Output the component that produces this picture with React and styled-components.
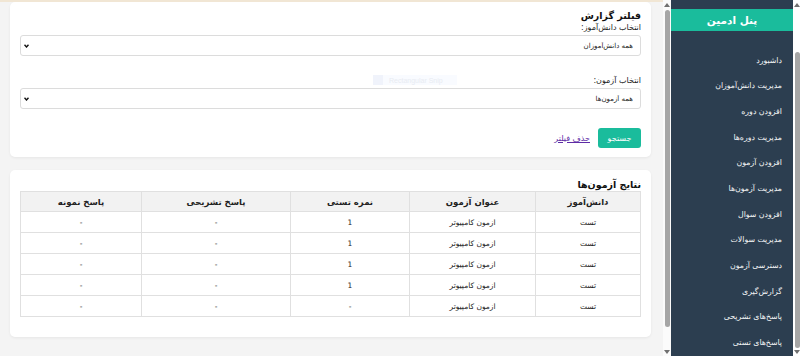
import React, { useLayoutEffect, useRef } from "react";
import styled, { createGlobalStyle } from "styled-components";

const Global = createGlobalStyle`
  html, body { margin: 0; padding: 0; height: 100%; }
  body { font-family: "DejaVu Sans", "Noto Sans", sans-serif; background: #f4f4f4; color: #222; }
  #root { height: 100%; }
  * { box-sizing: border-box; }
`;

const Layout = styled.div`
  display: flex;
  height: 100vh;
  width: 100%;
`;

const Pane = styled.div`
  flex: 0 0 ${(p) => p.$w}px;
  height: 100%;
  display: flex;
  background: ${(p) => p.$bg};
`;

const ScrollArea = styled.div`
  position: relative;
  flex: 1;
  min-width: 0;
  height: 100%;
  overflow-y: scroll;
  scrollbar-width: none;
  &::-webkit-scrollbar { display: none; }
`;

const MainArea = styled(ScrollArea)`
  background: #f4f4f4;
  border-top: 2px solid #f1e6d4;
  padding: 0 12px 42px 10px;
`;

const Track = styled.div`
  flex: 0 0 8px;
  height: 100%;
  background: ${(p) => p.$bg};
  display: flex;
  flex-direction: column;
  align-items: center;
`;

const Arrow = styled.svg`
  flex: 0 0 auto;
  width: 6px;
  height: 4px;
  margin: ${(p) => p.$m};
  fill: #707070;
`;

const Thumb = styled.div`
  width: 5px;
  border-radius: 3px;
  background: #a6a6a6;
  margin-top: ${(p) => p.$top}px;
  height: ${(p) => p.$h}px;
`;

const Card = styled.section`
  direction: rtl;
  background: #fff;
  border-radius: 5px;
  box-shadow: 0 1px 3px rgba(0, 0, 0, 0.06);
  padding: ${(p) => p.$pad};
  & + & { margin-top: 13px; }
`;

const CardTitle = styled.h2`
  margin: 0;
  font-size: 9.5px;
  line-height: 12px;
  font-weight: bold;
  color: #111;
`;

const Field = styled.div`
  display: flex;
  flex-direction: column;
  & + & { margin-top: 19px; }
`;

const Label = styled.label`
  display: block;
  font-size: 8px;
  line-height: 11px;
  color: #222;
  margin-bottom: 2px;
`;

const SelectWrap = styled.div`
  position: relative;
  height: 21px;
`;

const Select = styled.select`
  display: block;
  appearance: none;
  -webkit-appearance: none;
  height: 21px;
  width: 100%;
  margin: 0;
  border: 1px solid #dcdcdc;
  border-radius: 3px;
  background: #fff;
  font-family: "DejaVu Sans", sans-serif;
  font-size: 7px;
  color: #222;
  padding: 0 7px 0 16px;
  direction: rtl;
  outline: none;
`;

const Chevron = styled.svg`
  position: absolute;
  left: 4px;
  top: 9px;
  width: 5px;
  height: 4px;
  fill: none;
  stroke: #111;
  stroke-width: 1.4;
  pointer-events: none;
`;

const Actions = styled.div`
  display: flex;
  align-items: center;
  gap: 8px;
  margin-top: 19px;
`;

const Button = styled.button`
  height: 20px;
  width: 43px;
  padding: 0;
  border: none;
  border-radius: 3px;
  background: #1abc9c;
  color: #fff;
  font-family: "DejaVu Sans", sans-serif;
  font-size: 8px;
`;

const Link = styled.a`
  color: #5e2ca5;
  font-size: 8px;
  text-decoration: underline;
`;

const Snip = styled.div`
  position: absolute;
  left: 373px;
  top: 73px;
  width: 84px;
  height: 10px;
  display: flex;
  align-items: center;
  gap: 6px;
  background: #f9fbff;
  color: #e8ebf2;
  font-size: 7px;
  font-family: "Liberation Sans", sans-serif;
  pointer-events: none;
`;

const SnipIcon = styled.span`
  width: 10px;
  height: 10px;
  background: #f0f3fb;
`;

const Table = styled.table`
  width: 100%;
  border-collapse: collapse;
  table-layout: fixed;
  font-size: 7.5px;
  color: #222;
`;

const Th = styled.th`
  background: #f2f2f2;
  border: 1px solid #e0e0e0;
  height: 20px;
  padding: 0;
  font-size: 8.5px;
  font-weight: bold;
  text-align: center;
`;

const Td = styled.td`
  border: 1px solid #e0e0e0;
  height: 21px;
  padding: 0;
  text-align: center;
`;

const SideArea = styled(ScrollArea)`
  background: #2c3e50;
  padding-top: 62px;
  padding-bottom: 1px;
`;

const SideHeader = styled.div`
  direction: rtl;
  height: 22px;
  display: flex;
  align-items: center;
  justify-content: center;
  background: #1abc9c;
  color: #fff;
  font-weight: bold;
  font-size: 10.5px;
  margin-bottom: 16.5px;
`;

const Menu = styled.ul`
  list-style: none;
  margin: 0;
  padding: 0;
  direction: rtl;
`;

const MenuItem = styled.li`
  height: 25.67px;
  display: flex;
  align-items: center;
  padding: 0 11px;
  color: #f4f6f7;
  font-size: 7.8px;
`;

const menu = [
  "داشبورد",
  "مدیریت دانش‌آموزان",
  "افزودن دوره",
  "مدیریت دوره‌ها",
  "افزودن آزمون",
  "مدیریت آزمون‌ها",
  "افزودن سوال",
  "مدیریت سوالات",
  "دسترسی آزمون",
  "گزارش‌گیری",
  "پاسخ‌های تشریحی",
  "پاسخ‌های تستی",
];

const cols = [
  { t: "دانش‌آموز", w: 105 },
  { t: "عنوان آزمون", w: 126 },
  { t: "نمره تستی", w: 119 },
  { t: "پاسخ تشریحی", w: 149 },
  { t: "پاسخ نمونه", w: 121 },
];

const rows = [
  ["تست", "ازمون کامپیوتر", "1", "-", "-"],
  ["تست", "ازمون کامپیوتر", "1", "-", "-"],
  ["تست", "ازمون کامپیوتر", "1", "-", "-"],
  ["تست", "ازمون کامپیوتر", "1", "-", "-"],
  ["تست", "ازمون کامپیوتر", "-", "-", "-"],
];

function ScrollTrack({ bg, top, h }) {
  return (
    <Track $bg={bg}>
      <Arrow viewBox="0 0 6 4" $m="3px 0 0">
        <polygon points="3,0 6,4 0,4" />
      </Arrow>
      <Thumb $top={top} $h={h} />
      <Arrow viewBox="0 0 6 4" $m="auto 0 2px">
        <polygon points="0,0 6,0 3,4" />
      </Arrow>
    </Track>
  );
}

function FilterSelect({ label, value }) {
  return (
    <Field>
      <Label>{label}</Label>
      <SelectWrap>
        <Select defaultValue="all">
          <option value="all">{value}</option>
        </Select>
        <Chevron viewBox="0 0 5 4">
          <polyline points="0.5,0.8 2.5,3 4.5,0.8" />
        </Chevron>
      </SelectWrap>
    </Field>
  );
}

export default function App() {
  const sideRef = useRef(null);
  useLayoutEffect(() => {
    if (sideRef.current) sideRef.current.scrollTop = sideRef.current.scrollHeight;
  }, []);
  return (
    <>
      <Global />
      <Layout>
        <Pane $w={670} $bg="#f4f4f4">
          <MainArea>
            <Card $pad="8px 10px 9px">
              <CardTitle>فیلتر گزارش</CardTitle>
              <FilterSelect label="انتخاب دانش‌آموز:" value="همه دانش‌آموزان" />
              <FilterSelect label="انتخاب آزمون:" value="همه آزمون‌ها" />
              <Actions>
                <Button>جستجو</Button>
                <Link href="#">حذف فیلتر</Link>
              </Actions>
            </Card>
            <Card $pad="9px 10px 20px">
              <CardTitle>نتایج آزمون‌ها</CardTitle>
              <Table>
                <colgroup>
                  {cols.map((c) => (
                    <col key={c.t} style={{ width: c.w }} />
                  ))}
                </colgroup>
                <thead>
                  <tr>
                    {cols.map((c) => (
                      <Th key={c.t}>{c.t}</Th>
                    ))}
                  </tr>
                </thead>
                <tbody>
                  {rows.map((r, i) => (
                    <tr key={i}>
                      {r.map((v, j) => (
                        <Td key={j}>{v}</Td>
                      ))}
                    </tr>
                  ))}
                </tbody>
              </Table>
            </Card>
            <Snip>
              <SnipIcon />
              Rectangular Snip
            </Snip>
          </MainArea>
          <ScrollTrack bg="#fbfbfb" top={3} h={317} />
        </Pane>
        <Pane $w={130} $bg="#2c3e50">
          <SideArea ref={sideRef}>
            <SideHeader>پنل ادمین</SideHeader>
            <Menu>
              {menu.map((m) => (
                <MenuItem key={m}>{m}</MenuItem>
              ))}
            </Menu>
          </SideArea>
          <ScrollTrack bg="#ffffff" top={45} h={296} />
        </Pane>
      </Layout>
    </>
  );
}
